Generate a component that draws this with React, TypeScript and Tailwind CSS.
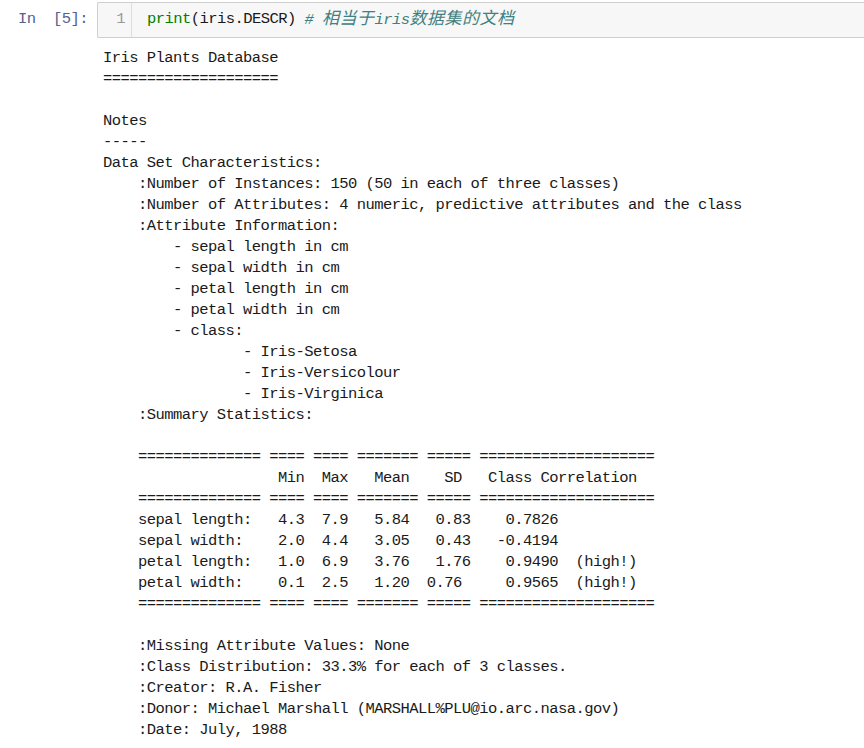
const descr = [
  "Iris Plants Database",
  "====================",
  "",
  "Notes",
  "-----",
  "Data Set Characteristics:",
  "    :Number of Instances: 150 (50 in each of three classes)",
  "    :Number of Attributes: 4 numeric, predictive attributes and the class",
  "    :Attribute Information:",
  "        - sepal length in cm",
  "        - sepal width in cm",
  "        - petal length in cm",
  "        - petal width in cm",
  "        - class:",
  "                - Iris-Setosa",
  "                - Iris-Versicolour",
  "                - Iris-Virginica",
  "    :Summary Statistics:",
  "",
  "    ============== ==== ==== ======= ===== ====================",
  "                    Min  Max   Mean    SD   Class Correlation",
  "    ============== ==== ==== ======= ===== ====================",
  "    sepal length:   4.3  7.9   5.84   0.83    0.7826",
  "    sepal width:    2.0  4.4   3.05   0.43   -0.4194",
  "    petal length:   1.0  6.9   3.76   1.76    0.9490  (high!)",
  "    petal width:    0.1  2.5   1.20  0.76     0.9565  (high!)",
  "    ============== ==== ==== ======= ===== ====================",
  "",
  "    :Missing Attribute Values: None",
  "    :Class Distribution: 33.3% for each of 3 classes.",
  "    :Creator: R.A. Fisher",
  "    :Donor: Michael Marshall (MARSHALL%PLU@io.arc.nasa.gov)",
  "    :Date: July, 1988",
];

export default function App() {
  return (
    <div className="w-[864px] h-[748px] overflow-hidden bg-white font-['Liberation_Mono','Noto_Sans_CJK_SC',monospace] text-[15.5px] tracking-[-0.55px] text-[#1a1a1a]">
      {/* input cell */}
      <div className="flex pt-[2px]">
        <div className="w-[97px] shrink-0 flex items-center justify-end pr-[9px] text-[#55608f] whitespace-pre">
          In  [5]:
        </div>
        <div className="flex-1 h-[36px] flex items-stretch border border-[#cfcfcf] border-r-0 bg-[#f7f7f7] rounded-l-[2px]">
          <div className="w-[34px] shrink-0 flex items-center justify-end pr-[6px] border-r border-[#dddddd] text-[#999999]">
            1
          </div>
          <div className="flex items-center pl-[15px] whitespace-pre">
            <span className="text-[#008000]">print</span>
            <span>(iris.DESCR) </span>
            <span className="italic text-[#408080]">
              #{" "}
              <span className="text-[17px] tracking-[0.5px]">相当于</span>
              iris
              <span className="text-[17px] tracking-[0.5px]">数据集的文档</span>
            </span>
          </div>
        </div>
      </div>

      {/* output */}
      <pre className="mt-[10px] pl-[103px] font-['Liberation_Mono',monospace] text-[15.5px] tracking-[-0.55px] leading-[21px] text-[#1a1a1a]">
        {descr.join("\n")}
      </pre>
    </div>
  );
}
